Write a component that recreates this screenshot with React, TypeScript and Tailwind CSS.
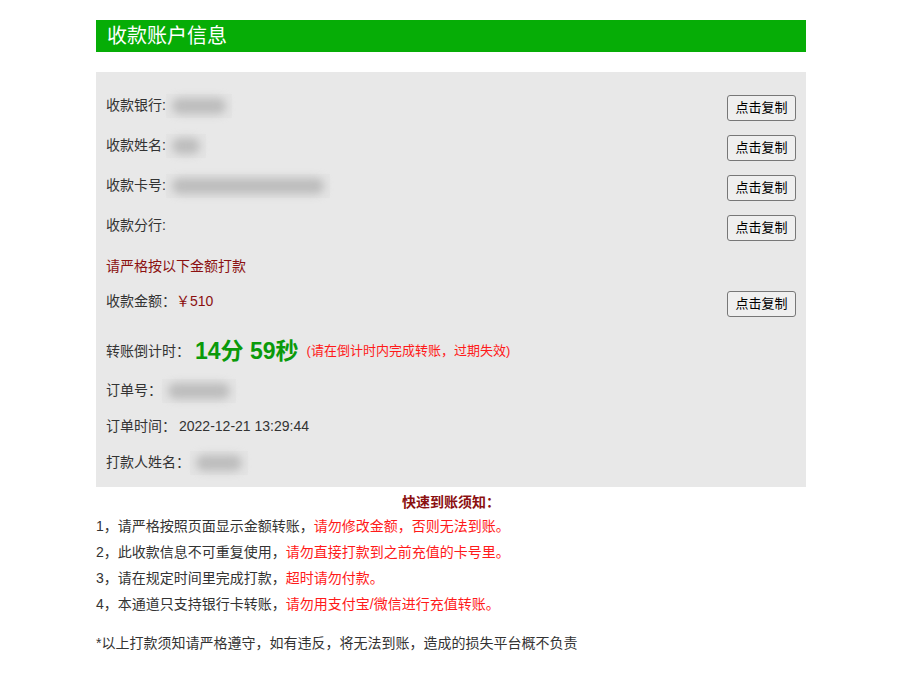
import React from "react";

const font = { fontFamily: '"Liberation Sans", "Noto Sans CJK SC", sans-serif' };

function Blur({ w }: { w: number }) {
  return (
    <span className="inline-flex h-6 items-center bg-[#e4e4e4] px-[6px]" style={{ width: w }}>
      <span className="block h-[16px] w-full rounded-full bg-[#bdbdbd] blur-[4px]" />
    </span>
  );
}

function CopyBtn() {
  return (
    <button className="h-[26px] w-[69px] rounded-[3px] border border-[#777] bg-[#efefef] text-[13px] text-black">
      点击复制
    </button>
  );
}

function Row({
  label,
  children,
  btn,
  h = "h-10",
}: {
  label: string;
  children?: React.ReactNode;
  btn?: boolean;
  h?: string;
}) {
  return (
    <div className={`flex items-center justify-between ${h}`}>
      <div className="flex items-center pb-[5px]">
        <span>{label}</span>
        {children}
      </div>
      {btn && <CopyBtn />}
    </div>
  );
}

export default function App() {
  return (
    <div className="min-h-[697px] bg-white text-[14px] text-[#333]" style={font}>
      <div className="ml-[96px] w-[710px] pt-5">
        <div className="flex h-8 items-center bg-[#06ad06] pl-[11px] text-[20px] text-white">
          收款账户信息
        </div>

        <div className="mt-5 bg-[#e8e8e8] pl-[10px] pr-[10px] pt-4 pb-[4px]">
          <Row label="收款银行:" btn>
            <Blur w={66} />
          </Row>
          <Row label="收款姓名:" btn>
            <Blur w={40} />
          </Row>
          <Row label="收款卡号:" btn>
            <Blur w={164} />
          </Row>
          <Row label="收款分行:" btn />
          <div className="flex h-9 items-center text-[#8b1010]">请严格按以下金额打款</div>
          <Row label="收款金额：" btn>
            <span className="text-[#8b1010]">￥510</span>
          </Row>
          <div className="flex h-[51px] items-center pt-[3px]">
            <span>转账倒计时：</span>
            <span className="ml-[5px] text-[23px] font-bold text-[#0a9a0a]">14分 59秒</span>
            <span className="ml-2 text-[13px] text-[#ff1a1a]">(请在倒计时内完成转账，过期失效)</span>
          </div>
          <Row label="订单号：" h="h-9">
            <Blur w={74} />
          </Row>
          <Row label="订单时间：" h="h-9">
            <span className="ml-[3px]">2022-12-21 13:29:44</span>
          </Row>
          <Row label="打款人姓名：" h="h-9">
            <Blur w={58} />
          </Row>
        </div>

        <div className="h-[26px] pt-[2px] text-center font-bold leading-[26px] text-[#8b1010]">快速到账须知：</div>
        <ul className="leading-[26px]">
          <li>
            1，请严格按照页面显示金额转账，<span className="text-[#ff1a1a]">请勿修改金额，否则无法到账。</span>
          </li>
          <li>
            2，此收款信息不可重复使用，<span className="text-[#ff1a1a]">请勿直接打款到之前充值的卡号里。</span>
          </li>
          <li>
            3，请在规定时间里完成打款，<span className="text-[#ff1a1a]">超时请勿付款。</span>
          </li>
          <li>
            4，本通道只支持银行卡转账，<span className="text-[#ff1a1a]">请勿用支付宝/微信进行充值转账。</span>
          </li>
        </ul>
        <p className="mt-[13px] leading-[26px]">*以上打款须知请严格遵守，如有违反，将无法到账，造成的损失平台概不负责</p>
      </div>
    </div>
  );
}
